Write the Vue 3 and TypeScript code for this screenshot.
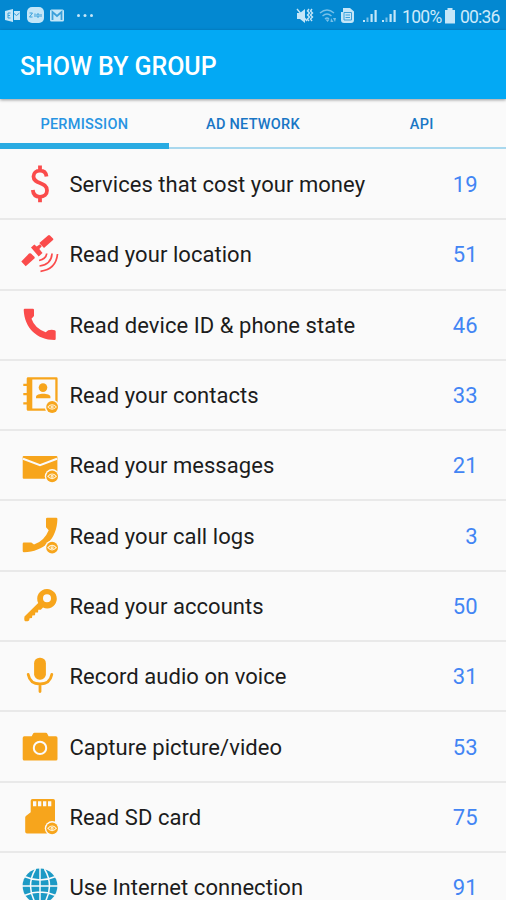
<script setup lang="ts">
import { ref } from 'vue'

interface PermissionItem {
  icon: string
  label: string
  count: number
  tone: 'red' | 'amber' | 'blue'
  badgeY?: number
}

const tabs = ['PERMISSION', 'AD NETWORK', 'API']
const active = ref(0)

const items: PermissionItem[] = [
  { icon: 'dollar', label: 'Services that cost your money', count: 19, tone: 'red' },
  { icon: 'satellite', label: 'Read your location', count: 51, tone: 'red' },
  { icon: 'phone', label: 'Read device ID & phone state', count: 46, tone: 'red' },
  { icon: 'contacts', label: 'Read your contacts', count: 33, tone: 'amber', badgeY: 32 },
  { icon: 'mail', label: 'Read your messages', count: 21, tone: 'amber', badgeY: 31.3 },
  { icon: 'calls', label: 'Read your call logs', count: 3, tone: 'amber', badgeY: 31.7 },
  { icon: 'key', label: 'Read your accounts', count: 50, tone: 'amber' },
  { icon: 'mic', label: 'Record audio on voice', count: 31, tone: 'amber' },
  { icon: 'camera', label: 'Capture picture/video', count: 53, tone: 'amber' },
  { icon: 'sd', label: 'Read SD card', count: 75, tone: 'amber', badgeY: 31.3 },
  { icon: 'globe', label: 'Use Internet connection', count: 91, tone: 'blue' },
]
</script>

<template>
  <div class="screen">
    <div class="status">
      <svg class="notices" viewBox="0 0 100 30">
        <path d="M5 11l8-2v13l-8-2z M14 11h6v9h-6z" />
        <path class="cut" d="M10.500 13H8v5h2.500M8 15.500h2 M14 13.500l2.500 2 3-2.500" />
        <rect x="27" y="7" width="17" height="16" rx="5" />
        <path class="cut" d="M29.500 13h3l-3 4h3M35 13.500v3.500M37 14h2v3h-2zM41 14v3" />
        <rect x="50" y="9.500" width="14" height="12" rx="1.500" />
        <path class="cut wide" d="M52.500 20v-8l4.500 4 4.500-4v8" />
        <circle cx="78.500" cy="15.500" r="1.500" /><circle cx="85" cy="15.500" r="1.500" /><circle cx="91.500" cy="15.500" r="1.500" />
      </svg>
      <svg class="signals" viewBox="0 0 105 30">
        <path d="M1 13h3l5-4v14l-5-4H1z" />
        <path class="line" d="M1 9l10 12M13 9l-1.500 2 2 2-2 2 2 2-2 2 1.500 2M16 9l-1.500 2 2 2-2 2 2 2-2 2 1.500 2" />
        <path class="line dim" d="M24 13q7-6 14 0M26.500 16q4.500-4 9 0M29 19q2-2 4 0" />
        <path class="dim" d="M29.500 19.500h4L31.500 22zM35 18l2.500 4h-3zM39 22l-2-4h3z" />
        <path fill-rule="evenodd" d="M47 8h7l4 3.500V20q0 3-3 3h-7q-3 0-3-3v-8h2z" />
        <path class="cut" d="M48 20v-7.500h7.500V20zM49.500 15h4.500M49.500 17.500h4.500" />
        <path d="M67 20h2v2h-2zM74.500 14h2.200v8h-2.200zM78.500 10h2.200v12h-2.200zM86 20h2v2h-2zM93.500 14h2.200v8h-2.200zM97.500 10h2.200v12h-2.200z" />
        <path class="dim" d="M70.500 17.500h2v4.500h-2zM89.500 17.500h2v4.500h-2z" />
      </svg>
      <span class="power">100%</span>
      <svg class="battery" viewBox="0 0 12 16"><path d="M3.500 0h5v2H11v13.500H1V2h2.500z" /></svg>
      <span class="clock">00:36</span>
    </div>

    <header class="bar"><h1>SHOW BY GROUP</h1></header>

    <nav class="tabs">
      <button
        v-for="(tab, i) in tabs"
        :key="tab"
        class="tab"
        :class="{ active: i === active }"
        @click="active = i"
      >{{ tab }}</button>
    </nav>

    <ul class="list">
      <li v-for="item in items" :key="item.label" class="row">
        <svg class="icon" :class="item.tone" viewBox="0 0 40 40">
          <template v-if="item.icon === 'dollar'">
            <path class="stroke" stroke-width="3.800" d="M26.500 12.500C26 8.500 23.500 6.700 20 6.700c-4 0-6.500 2.300-6.500 5.800 0 8 13.500 5 13.500 14 0 4-3 6.300-7 6.300-4.300 0-6.800-2.600-7.200-6.800M20 1.500V7M20 33v5.300" />
          </template>
          <template v-else-if="item.icon === 'satellite'">
            <path d="M19.300 9l8.700-7.600q1-.8 2 0L33 4.400q.7.900 0 1.700L24 13.900zM11 13.400l3.300-2.900 2.400 2 3.300-2.300 1.800 2L19.300 15l3.200 4-3.800 3.500zM1.300 27.400l7.700-7.800q1-.9 2 0l3.400 3.200q.7.900 0 1.600L5.700 32.300z" />
            <path class="stroke" stroke-width="1.700" d="M26.700 19.500q-.6 5.400-7.600 7M32 19.500q-.5 11-12.500 12.500M37.500 20q-1.500 15.500-17 17.300" />
          </template>
          <template v-else-if="item.icon === 'phone'">
            <path d="M4.800 3.700h8q1.300 0 1.200 1.200v6.200l-2.500 2.700q3.300 9.700 14.200 13.400l2.500-2q3.800-.7 6.500 0 1 .2 1 1.200v7.400q0 1.200-1.200 1.200C17 35 4.500 23 3.700 5q0-1.300 1.100-1.300z" />
          </template>
          <template v-else-if="item.icon === 'contacts'">
            <path fill-rule="evenodd" d="M8 2.300h28.400q1.200 0 1.200 1.200v31q0 1.200-1.200 1.200H8q-1.300 0-1.300-1.300V3.600Q6.700 2.300 8 2.300zM12.300 4.600v29h23V4.600z" />
            <path d="M3.300 8.700h5v2.300h-5zM3.300 17.900h5v2.300h-5zM3.300 27.200h5v2.300h-5z" />
            <circle cx="23" cy="12.600" r="4.300" />
            <path d="M16 23.300v-1.600c0-2 3.500-3 7.200-3s7.200 1 7.200 3v1.600z" />
          </template>
          <template v-else-if="item.icon === 'mail'">
            <rect x="2.700" y="11" width="34.700" height="22.700" rx="1" />
            <path class="gap" d="M3 13.800l17 6.500 17-6.500" />
          </template>
          <template v-else-if="item.icon === 'calls'">
            <path d="M27.200 1.700h9q1.200 0 1.200 1.200C37 23 24 35.300 4 36.300q-1.300 0-1.300-1.200v-7.300q0-1.200 1.200-1.200h7.400l2.700 2q10.500-3.800 14.700-14.400L26 11.300V2.900q0-1.200 1.200-1.200z" />
          </template>
          <template v-else-if="item.icon === 'key'">
            <path fill-rule="evenodd" d="M27 3a9.700 9.700 0 1 1-4 18.500l-2.200 2.300-2.500-.1-.3 2.700-2.700.2-.3 2.600-2.700.2-.3 2.600-2.400.2-.5 2.200q-2 1.300-4.400.7-.8-2.400-.2-4.700L18.200 17A9.700 9.700 0 0 1 27 3zM27 8.300a4 4 0 1 0 0 8 4 4 0 0 0 0-8z" />
          </template>
          <template v-else-if="item.icon === 'mic'">
            <rect x="14.100" y="1.700" width="11.800" height="22" rx="5.500" />
            <path class="stroke round" stroke-width="2.800" d="M8.200 18.500C9.500 25.300 14 28 20 28s10.500-2.700 11.800-9.500M20 28v7.500" />
          </template>
          <template v-else-if="item.icon === 'camera'">
            <path d="M4.300 9.300h7.400l1.300-2.600q.4-1 1.500-1h11.300q1.100 0 1.500 1l1.300 2.600h7.300q1.600 0 1.600 1.600v21q0 1.600-1.600 1.600H4.300q-1.600 0-1.600-1.600v-21q0-1.600 1.600-1.600z" />
            <circle class="gap" cx="20" cy="20.900" r="6.200" />
          </template>
          <template v-else-if="item.icon === 'sd'">
            <path d="M12.500 2h20.700q1.800 0 1.800 1.800v31q0 1.800-1.800 1.800H7q-1.800 0-1.800-1.800V20.500q0-.9.700-1.500l4.800-3.800V3.800q0-1.800 1.800-1.800z" />
            <path class="hole" d="M13 4.300h3.300v5H13zM18 4.300h3.300v5H18zM23 4.300h3.300v5H23zM28 4.300h3.300v5H28z" />
          </template>
          <template v-else>
            <circle cx="20" cy="19" r="17.400" />
            <path class="gap thin" d="M20 1v36M2 19h36M5 9.800q15 6.500 30 0M5 28.200q15-6.500 30 0M15.500 2Q5.500 19 15.500 36M24.500 2q10 17 0 34" />
          </template>
          <g v-if="item.badgeY" :transform="`translate(32.100 ${item.badgeY})`">
            <circle class="hole" r="7.300" />
            <circle r="5.900" />
            <path class="eye" d="M-4.200 0Q0-4.600 4.200 0 0 4.600-4.200 0z" />
            <circle class="eye" r="1" />
          </g>
        </svg>
        <span class="label">{{ item.label }}</span>
        <span class="count">{{ item.count }}</span>
      </li>
    </ul>
  </div>
</template>

<style>
body {
  margin: 0;
  overflow: hidden;
}
</style>

<style scoped>
.screen {
  width: 506px;
  height: 900px;
  overflow: hidden;
  display: flex;
  flex-direction: column;
  background: #fafafa;
  font-family: Roboto, "Liberation Sans", sans-serif;
}
.status {
  flex: none;
  height: 30px;
  display: flex;
  align-items: center;
  background: #0388d1;
  color: #cdeafa;
  font-size: 17.500px;
  line-height: 30px;
}
.status svg {
  fill: #c4e6f8;
  flex: none;
}
.notices {
  width: 100px;
  height: 30px;
}
.signals {
  width: 105px;
  height: 30px;
  margin-left: 196px;
}
.status .cut {
  fill: none;
  stroke: #3ba0da;
  stroke-width: 1;
}
.status .wide {
  stroke-width: 1.800;
}
.status .line {
  fill: none;
  stroke: #c4e6f8;
  stroke-width: 1.400;
}
.status .dim {
  opacity: 0.600;
}
.power {
  width: 43px;
  padding: 3px 0 0 1px;
  letter-spacing: -0.700px;
  box-sizing: border-box;
}
.battery {
  width: 12px;
  height: 16px;
  margin-top: 2px;
}
.clock {
  padding: 3px 0 0 4px;
  letter-spacing: -0.800px;
}
.bar {
  flex: none;
  height: 69px;
  display: flex;
  align-items: center;
  padding: 3px 20px 0;
  box-sizing: border-box;
  background: #03a9f4;
  box-shadow: 0 1px 3px rgba(0, 0, 0, 0.400);
  z-index: 1;
}
h1 {
  margin: 0;
  color: #fff;
  font-size: 25px;
  font-weight: 500;
  letter-spacing: -0.050px;
  white-space: nowrap;
}
.tabs {
  flex: none;
  height: 50px;
  display: grid;
  grid-template-columns: repeat(3, 1fr);
  box-sizing: border-box;
  box-shadow: inset 0 -2px #a9d8ee;
}
.tab {
  border: 0;
  border-bottom: 6px solid transparent;
  padding: 7px 0 0;
  background: none;
  color: #1976c5;
  font: 500 14.500px Roboto, sans-serif;
  letter-spacing: 0.250px;
}
.tab.active {
  color: #2794e2;
  border-bottom-color: #29abe2;
}
.list {
  list-style: none;
  margin: 0;
  padding: 1px 0 0;
}
.row {
  height: 70.300px;
  box-sizing: border-box;
  display: flex;
  align-items: center;
  padding: 0 28.500px 0 20px;
  border-bottom: 2px solid #e9e9e9;
}
.icon {
  flex: none;
  width: 40px;
  height: 40px;
}
.red {
  color: #fa4b4b;
}
.amber {
  color: #f7a51c;
}
.blue {
  color: #1d9ac5;
}
.icon {
  fill: currentColor;
}
.stroke {
  fill: none;
  stroke: currentColor;
}
.round {
  stroke-linecap: round;
}
.gap {
  fill: none;
  stroke: #fafafa;
  stroke-width: 2;
}
.thin {
  stroke-width: 1.500;
}
.hole {
  fill: #fafafa;
}
.eye {
  fill: none;
  stroke: #fff0cf;
  stroke-width: 1.100;
}
.label {
  flex: 1;
  margin-left: 9.500px;
  padding-top: 1px;
  color: #1c1c1c;
  font-size: 22px;
  letter-spacing: 0.050px;
  white-space: nowrap;
}
.count {
  padding-top: 1px;
  color: #4285f4;
  font-size: 22px;
}
</style>
